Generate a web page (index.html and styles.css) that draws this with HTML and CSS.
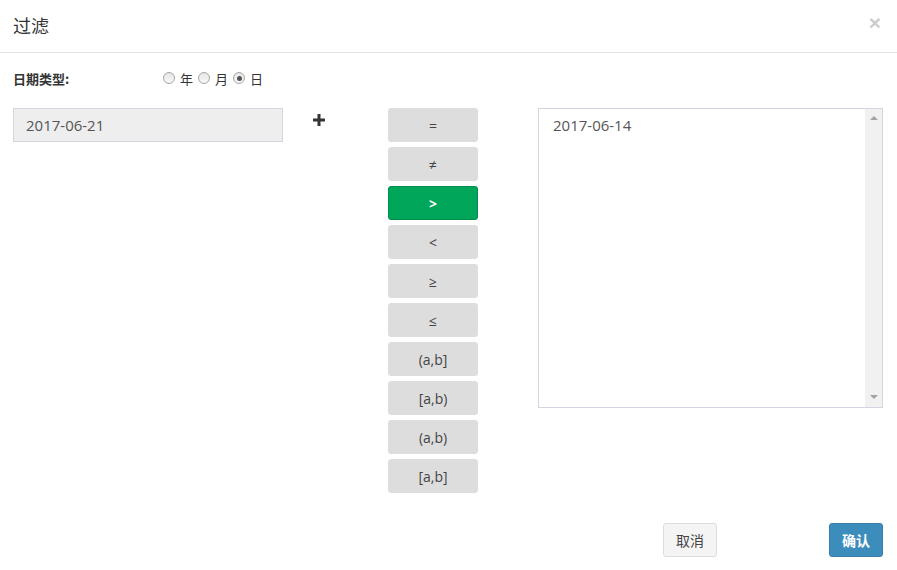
FILE: index.html
```html
<!DOCTYPE html>
<html lang="zh">
<head>
<meta charset="utf-8">
<title>过滤</title>
<link rel="stylesheet" href="styles.css">
</head>
<body>
<div class="modal">
  <div class="modal-header">
    <h4 class="modal-title">过滤</h4>
    <span class="close">×</span>
  </div>
  <div class="modal-body">
    <div class="type-row">
      <label class="type-label">日期类型:</label>
      <div class="radios">
        <span class="radio"></span><span class="radio-text">年</span>
        <span class="radio"></span><span class="radio-text">月</span>
        <span class="radio checked"></span><span class="radio-text">日</span>
      </div>
    </div>
    <div class="main-row">
      <div class="date-input">2017-06-21</div>
      <div class="plus">
        <svg width="12" height="12" viewBox="0 0 12 12"><rect x="4.5" y="0" width="3" height="12" fill="#333"/><rect x="0" y="4.5" width="12" height="3" fill="#333"/></svg>
      </div>
      <div class="ops">
        <div class="op">=</div>
        <div class="op">≠</div>
        <div class="op active">&gt;</div>
        <div class="op">&lt;</div>
        <div class="op">≥</div>
        <div class="op">≤</div>
        <div class="op">(a,b]</div>
        <div class="op">[a,b)</div>
        <div class="op">(a,b)</div>
        <div class="op">[a,b]</div>
      </div>
      <div class="value-box">
        <div class="value-text">2017-06-14</div>
        <div class="scrollbar">
          <span class="arrow up"></span>
          <span class="arrow down"></span>
        </div>
      </div>
    </div>
    <div class="footer">
      <div class="btn btn-default">取消</div>
      <div class="btn btn-primary">确认</div>
    </div>
  </div>
</div>
</body>
</html>
```

FILE: styles.css
```css
* { box-sizing: border-box; }
html, body {
  margin: 0;
  padding: 0;
  background: #fff;
}
body {
  font-family: "Open Sans", "Noto Sans CJK SC", sans-serif;
  font-size: 14px;
  color: #333;
  width: 897px;
  height: 570px;
  overflow: hidden;
}
.modal-header {
  height: 53px;
  border-bottom: 1px solid #e5e5e5;
  display: flex;
  align-items: center;
  justify-content: space-between;
  padding: 0 16px 0 13px;
}
.modal-title {
  margin: 0;
  font-family: "Noto Sans CJK SC", sans-serif;
  font-size: 18px;
  font-weight: normal;
  color: #333;
  line-height: 1;
  position: relative;
  top: -1px;
}
.close {
  font-family: "Liberation Sans", sans-serif;
  font-size: 21px;
  font-weight: bold;
  color: #000;
  opacity: 0.2;
  line-height: 1;
  position: relative;
  top: -4px;
}
.modal-body {
  padding: 15px 14px 0 13px;
}
.type-row {
  display: flex;
  align-items: center;
  height: 20px;
}
.type-label {
  width: 150px;
  font-family: "Noto Sans CJK SC", sans-serif;
  font-size: 13px;
  font-weight: bold;
  color: #333;
}
.radios {
  display: flex;
  align-items: center;
}
.radio {
  width: 12px;
  height: 12px;
  border-radius: 50%;
  border: 1px solid #a6a6a6;
  background: linear-gradient(#e6e6e6, #f8f8f8);
  display: inline-flex;
  align-items: center;
  justify-content: center;
}
.radio.checked::after {
  content: "";
  width: 5px;
  height: 5px;
  border-radius: 50%;
  background: #555;
}
.radio-text {
  font-family: "Noto Sans CJK SC", sans-serif;
  font-size: 13px;
  color: #333;
  margin: 0 5px 0 5px;
  line-height: 1;
}
.main-row {
  display: flex;
  align-items: flex-start;
  margin-top: 20px;
}
.date-input {
  width: 270px;
  height: 34px;
  background: #eee;
  border: 1px solid #d2d6de;
  padding: 0 12px;
  line-height: 32px;
  color: #555;
  font-size: 15px;
}
.plus {
  margin-left: 30px;
  margin-top: 6px;
  width: 12px;
  height: 12px;
  display: flex;
}
.ops {
  margin-left: 63px;
  width: 90px;
  display: flex;
  flex-direction: column;
  gap: 5px;
}
.op {
  height: 34px;
  background: #ddd;
  border: 1px solid #ddd;
  border-radius: 3px;
  color: #444;
  font-size: 14px;
  display: flex;
  align-items: center;
  justify-content: center;
}
.op.active {
  background: #00a65a;
  border-color: #008d4c;
  color: #fff;
  font-weight: bold;
}
.value-box {
  margin-left: 60px;
  width: 345px;
  height: 300px;
  border: 1px solid #d2d6de;
  display: flex;
}
.value-text {
  flex: 1;
  padding: 6px 14px;
  color: #555;
  font-size: 15px;
  line-height: 20px;
}
.scrollbar {
  width: 17px;
  background: #f1f1f1;
  display: flex;
  flex-direction: column;
  justify-content: space-between;
  align-items: center;
  padding: 7px 0 8px;
}
.arrow {
  width: 0;
  height: 0;
  border-left: 4px solid transparent;
  border-right: 4px solid transparent;
}
.arrow.up { border-bottom: 4px solid #a3a3a3; }
.arrow.down { border-top: 4px solid #a3a3a3; }
.footer {
  display: flex;
  justify-content: flex-end;
  gap: 112px;
  margin-top: 30px;
}
.btn {
  width: 54px;
  height: 34px;
  border-radius: 3px;
  font-family: "Noto Sans CJK SC", sans-serif;
  font-size: 14px;
  display: flex;
  align-items: center;
  justify-content: center;
}
.btn-default {
  background: #f4f4f4;
  border: 1px solid #ddd;
  color: #444;
}
.btn-primary {
  background: #3c8dbc;
  border: 1px solid #367fa9;
  color: #fff;
  font-weight: bold;
}
```
